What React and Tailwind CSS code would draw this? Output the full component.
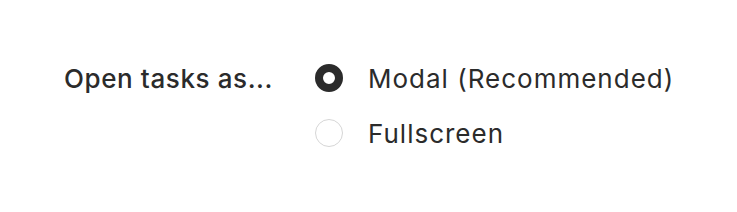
import React, { useState } from 'react';

const options = [
  { id: 'modal', label: 'Modal (Recommended)' },
  { id: 'fullscreen', label: 'Fullscreen' },
];

const App = () => {
  const [value, setValue] = useState('modal');

  return (
    <div className="w-[737px] h-[212px] bg-white font-['Inter',sans-serif] text-[#2b2b2b]">
      <div className="flex items-start pl-16 pt-[58px]">
        {/* Label */}
        <div className="w-[251px] h-10 flex items-center text-[26px] font-medium tracking-[0.6px]">
          Open tasks as...
        </div>

        {/* Options */}
        <div className="flex flex-col gap-[15px]">
          {options.map(opt => (
            <label key={opt.id} className="h-10 flex items-center gap-[25px] cursor-pointer">
              <span
                className={
                  value === opt.id
                    ? 'w-7 h-7 rounded-full border-[8px] border-[#2b2b2b] bg-white'
                    : 'w-7 h-7 rounded-full border border-[#d6d6d6] bg-white'
                }
                onClick={() => setValue(opt.id)}
              />
              <span className="text-[26px] tracking-[1px]">{opt.label}</span>
            </label>
          ))}
        </div>
      </div>
    </div>
  );
};

export default App;
